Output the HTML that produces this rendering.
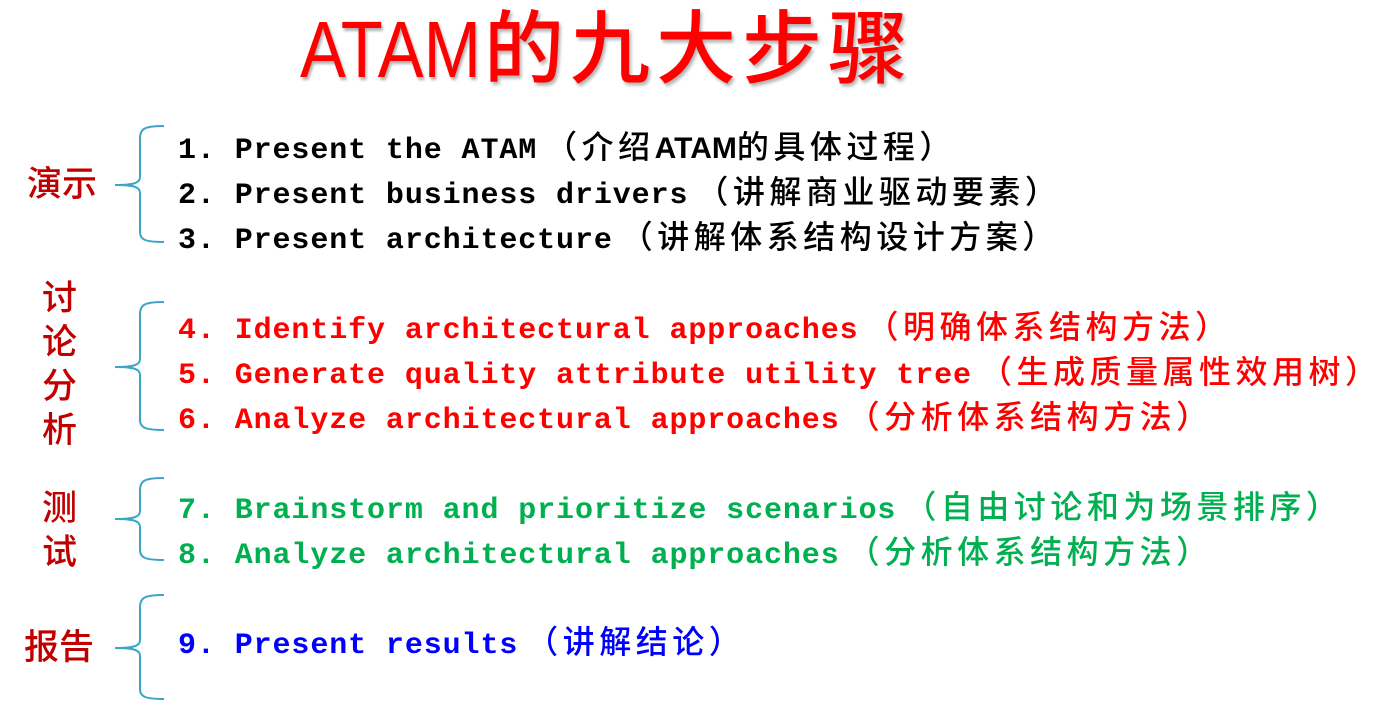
<!DOCTYPE html>
<html><head><meta charset="utf-8"><style>
html,body{margin:0;padding:0;background:#fff;width:1396px;height:720px;overflow:hidden;position:relative}
.t{position:absolute;left:300px;top:10px;font-family:"Liberation Sans","Noto Sans CJK SC",sans-serif;font-size:80px;line-height:80px;color:#f00;white-space:nowrap;text-shadow:2px 3px 3px rgba(0,0,0,.3)}
.t .a{display:inline-block;transform:scaleX(.86);transform-origin:left;width:184px}
.t .c{letter-spacing:6px;font-weight:500}
.l{position:absolute;left:178px;font-family:"Liberation Mono",monospace;font-weight:bold;font-size:30px;letter-spacing:.9px;line-height:45px;white-space:pre}
.l .z{font-family:"Liberation Sans","Noto Sans CJK SC",sans-serif;font-weight:500;letter-spacing:4.5px;font-size:32px;margin-left:8px}
.l .z i{font-style:normal;letter-spacing:0;font-size:30px;font-weight:bold}
.k{color:#000}.r{color:#f00}.g{color:#00b050}.b{color:#00f}
.lab{position:absolute;font-family:"Liberation Sans","Noto Sans CJK SC",sans-serif;font-weight:500;color:#c00000;font-size:35px;line-height:44px;white-space:nowrap}
</style></head><body>
<div class="t"><span class="a">ATAM</span><span class="c">的九大步骤</span></div>

<svg width="1396" height="720" style="position:absolute;left:0;top:0" fill="none" stroke="#3aa5c6" stroke-width="2">
<path d="M164,126 C146,126 140,128 140,138 L140,177 C140,183 134,185 115,185 C134,185 140,187 140,193 L140,232 C140,240 146,242 164,242"/>
<path d="M164,302 C146,302 140,304 140,314 L140,359 C140,365 134,367 115,367 C134,367 140,369 140,375 L140,420 C140,428 146,430 164,430"/>
<path d="M164,478 C146,478 140,480 140,490 L140,511 C140,517 134,519 115,519 C134,519 140,521 140,527 L140,550 C140,558 146,560 164,560"/>
<path d="M164,595 C146,595 140,597 140,607 L140,640 C140,646 134,648 115,648 C134,648 140,650 140,656 L140,689 C140,697 146,699 164,699"/>
</svg>

<div class="lab" style="left:27px;top:163px">演示</div>
<div class="lab" style="left:42px;top:277px;width:36px;white-space:normal">讨<br>论<br>分<br>析</div>
<div class="lab" style="left:42px;top:487px">测<br>试</div>
<div class="lab" style="left:24px;top:626px">报告</div>

<div class="l k" style="top:125px">1. Present the ATAM<span class="z">（介绍<i>ATAM</i>的具体过程）</span></div>
<div class="l k" style="top:170px">2. Present business drivers<span class="z">（讲解商业驱动要素）</span></div>
<div class="l k" style="top:215px">3. Present architecture<span class="z">（讲解体系结构设计方案）</span></div>
<div class="l r" style="top:305px">4. Identify architectural approaches<span class="z">（明确体系结构方法）</span></div>
<div class="l r" style="top:350px">5. Generate quality attribute utility tree<span class="z">（生成质量属性效用树）</span></div>
<div class="l r" style="top:395px">6. Analyze architectural approaches<span class="z">（分析体系结构方法）</span></div>
<div class="l g" style="top:485px">7. Brainstorm and prioritize scenarios<span class="z">（自由讨论和为场景排序）</span></div>
<div class="l g" style="top:530px">8. Analyze architectural approaches<span class="z">（分析体系结构方法）</span></div>
<div class="l b" style="top:620px">9. Present results<span class="z">（讲解结论）</span></div>
</body></html>
